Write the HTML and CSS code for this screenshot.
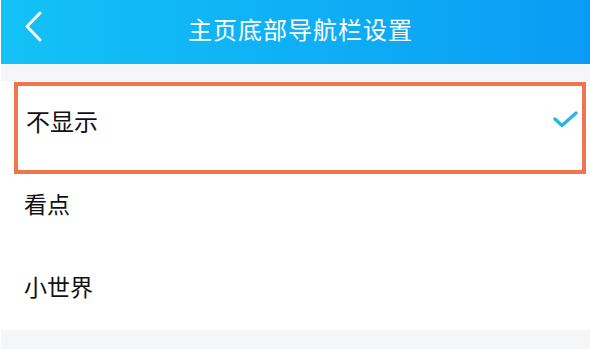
FILE: index.html
```html
<!DOCTYPE html>
<html lang="zh-CN">
<head>
    <meta charset="UTF-8">
    <meta name="viewport" content="width=device-width, initial-scale=1.0">
    <title>主页底部导航栏设置</title>
    <link rel="stylesheet" href="styles.css">
</head>
<body>
    <div class="page">
        <header class="nav-bar">
            <button class="back-btn" aria-label="返回">
                <svg width="20" height="32" viewBox="0 0 20 32">
                    <polyline points="15,2 2,15.5 15,29" fill="none" stroke="#fff" stroke-width="3" stroke-linecap="round" stroke-linejoin="round"/>
                </svg>
            </button>
            <h1 class="nav-title">主页底部导航栏设置</h1>
        </header>

        <div class="gap"></div>

        <ul class="option-list">
            <li class="option-item selected">
                <span class="option-label">不显示</span>
                <svg class="check-icon" width="26" height="18" viewBox="0 0 26 18">
                    <polyline points="2,8 9,14.5 23,2" fill="none" stroke="#2fb2e8" stroke-width="3.4" stroke-linecap="round" stroke-linejoin="round"/>
                </svg>
                <div class="highlight-box"></div>
            </li>
            <li class="option-item">
                <span class="option-label">看点</span>
            </li>
            <li class="option-item">
                <span class="option-label">小世界</span>
            </li>
        </ul>

        <div class="footer-gap"></div>
    </div>
</body>
</html>
```

FILE: styles.css
```css
* {
    margin: 0;
    padding: 0;
    box-sizing: border-box;
}

body {
    font-family: "Noto Sans CJK SC", "Noto Sans", sans-serif;
    background: #fff;
    width: 590px;
    height: 349px;
    overflow: hidden;
}

.page {
    margin-left: 1px;
    display: flex;
    flex-direction: column;
    height: 349px;
}

.nav-bar {
    position: relative;
    height: 64px;
    background: linear-gradient(90deg, #13c2f6 0%, #0fb0f5 50%, #0a9cf4 100%);
    display: flex;
    align-items: center;
    justify-content: center;
    padding-bottom: 8px;
}

.back-btn {
    position: absolute;
    left: 24px;
    top: 11px;
    background: none;
    border: none;
    width: 20px;
    height: 32px;
}

.back-btn svg {
    display: block;
}

.nav-title {
    font-size: 24px;
    font-weight: 400;
    color: #fff;
    letter-spacing: 1px;
    margin-left: 10px;
}

.gap {
    height: 17px;
    background: #f4f6f9;
}

.option-list {
    list-style: none;
    background: #fff;
}

.option-item {
    position: relative;
    height: 83px;
    display: flex;
    align-items: center;
    justify-content: space-between;
    padding: 0 11px 0 23px;
}

.option-label {
    font-size: 23px;
    color: #111;
    line-height: 1;
    margin-top: -4px;
}

.selected .option-label {
    font-size: 24px;
    margin-left: 2px;
}

.check-icon {
    display: block;
    margin-top: -6px;
}

.highlight-box {
    position: absolute;
    left: 13px;
    right: 4px;
    top: 1px;
    height: 92px;
    border: 4px solid #ef7550;
}

.footer-gap {
    flex: 1;
    background: #f5f6f8;
}
```
